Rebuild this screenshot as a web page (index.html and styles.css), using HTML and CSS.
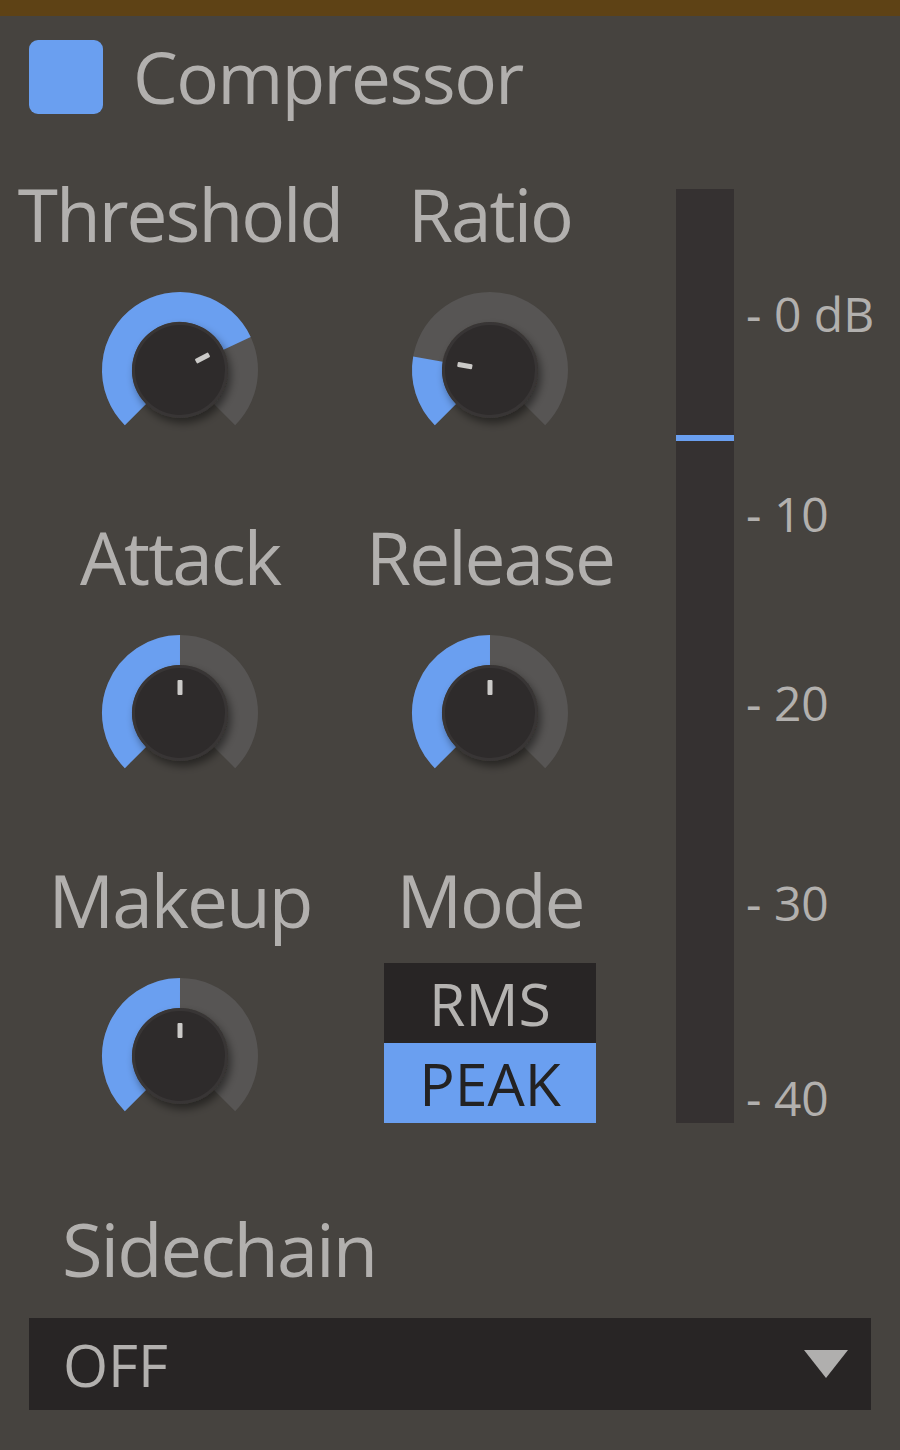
FILE: index.html
```html
<!DOCTYPE html>
<html lang="en">
<head>
  <meta charset="UTF-8">
  <title>Compressor</title>
  <link rel="stylesheet" href="styles.css">
</head>
<body>
  <svg width="0" height="0" class="defs">
    <defs>
      <filter id="knobShadow" x="-30%" y="-30%" width="160%" height="160%">
        <feDropShadow dx="3" dy="5" stdDeviation="4" flood-color="#000" flood-opacity="0.45"/>
      </filter>
    </defs>
  </svg>

  <div class="top-bar"></div>

  <div class="header">
    <div class="enable-box"></div>
    <div class="title">Compressor</div>
  </div>

  <div class="main">
    <div class="controls">
      <div class="cell">
        <div class="label">Threshold</div>
        <svg class="knob" viewBox="0 0 160 160" width="160" height="160">
          <path class="track" d="M35.45 124.55 A63 63 0 1 1 124.55 124.55"/>
          <path class="value" d="M35.45 124.55 A63 63 0 1 1 137.1 53.4"/>
          <circle class="cap-rim" cx="80" cy="80" r="48" filter="url(#knobShadow)"/>
          <circle class="cap" cx="80" cy="80" r="45"/>
          <rect class="pointer" x="77.5" y="47" width="5" height="15" rx="1" transform="rotate(62 80 80)"/>
        </svg>
      </div>

      <div class="cell">
        <div class="label">Ratio</div>
        <svg class="knob" viewBox="0 0 160 160" width="160" height="160">
          <path class="track" d="M35.45 124.55 A63 63 0 1 1 124.55 124.55"/>
          <path class="value" d="M35.45 124.55 A63 63 0 0 1 17.96 69.06"/>
          <circle class="cap-rim" cx="80" cy="80" r="48" filter="url(#knobShadow)"/>
          <circle class="cap" cx="80" cy="80" r="45"/>
          <rect class="pointer" x="77.5" y="47" width="5" height="15" rx="1" transform="rotate(-80 80 80)"/>
        </svg>
      </div>

      <div class="cell">
        <div class="label">Attack</div>
        <svg class="knob" viewBox="0 0 160 160" width="160" height="160">
          <path class="track" d="M35.45 124.55 A63 63 0 1 1 124.55 124.55"/>
          <path class="value" d="M35.45 124.55 A63 63 0 0 1 80 17"/>
          <circle class="cap-rim" cx="80" cy="80" r="48" filter="url(#knobShadow)"/>
          <circle class="cap" cx="80" cy="80" r="45"/>
          <rect class="pointer" x="77.5" y="47" width="5" height="15" rx="1"/>
        </svg>
      </div>

      <div class="cell">
        <div class="label">Release</div>
        <svg class="knob" viewBox="0 0 160 160" width="160" height="160">
          <path class="track" d="M35.45 124.55 A63 63 0 1 1 124.55 124.55"/>
          <path class="value" d="M35.45 124.55 A63 63 0 0 1 80 17"/>
          <circle class="cap-rim" cx="80" cy="80" r="48" filter="url(#knobShadow)"/>
          <circle class="cap" cx="80" cy="80" r="45"/>
          <rect class="pointer" x="77.5" y="47" width="5" height="15" rx="1"/>
        </svg>
      </div>

      <div class="cell">
        <div class="label">Makeup</div>
        <svg class="knob" viewBox="0 0 160 160" width="160" height="160">
          <path class="track" d="M35.45 124.55 A63 63 0 1 1 124.55 124.55"/>
          <path class="value" d="M35.45 124.55 A63 63 0 0 1 80 17"/>
          <circle class="cap-rim" cx="80" cy="80" r="48" filter="url(#knobShadow)"/>
          <circle class="cap" cx="80" cy="80" r="45"/>
          <rect class="pointer" x="77.5" y="47" width="5" height="15" rx="1"/>
        </svg>
      </div>

      <div class="cell">
        <div class="label">Mode</div>
        <div class="mode-switch">
          <div class="mode-option">RMS</div>
          <div class="mode-option active">PEAK</div>
        </div>
      </div>
    </div>

    <div class="meter">
      <div class="meter-level"></div>
    </div>

    <div class="scale">
      <div class="tick">- 0 dB</div>
      <div class="tick">- 10</div>
      <div class="tick">- 20</div>
      <div class="tick">- 30</div>
      <div class="tick">- 40</div>
    </div>
  </div>

  <div class="sidechain">
    <div class="label">Sidechain</div>
    <div class="dropdown">
      <span>OFF</span>
      <span class="arrow"></span>
    </div>
  </div>
</body>
</html>
```

FILE: styles.css
```css
* {
  box-sizing: border-box;
}

body {
  margin: 0;
  background: #46433f;
  font-family: 'Open Sans', 'Noto Sans', sans-serif;
  color: #b2b0ae;
  overflow: hidden;
}

.defs {
  position: absolute;
}

.top-bar {
  height: 16px;
  background: #5e4215;
}

.header {
  display: flex;
  align-items: center;
  gap: 30px;
  padding: 24px 0 0 29px;
}

.enable-box {
  width: 74px;
  height: 74px;
  border-radius: 9px;
  background: #6a9ff0;
}

.title {
  font-size: 71px;
  line-height: 74px;
  letter-spacing: -1.5px;
}

.main {
  display: flex;
  margin-top: 60px;
  padding-left: 25px;
}

.controls {
  display: grid;
  grid-template-columns: 310px 310px;
}

.cell {
  display: flex;
  flex-direction: column;
  align-items: center;
  height: 343px;
}

.label {
  font-size: 73px;
  line-height: 80px;
  letter-spacing: -2px;
  white-space: nowrap;
}

.knob {
  display: block;
  margin-top: 36px;
  overflow: visible;
}

.knob .track,
.knob .value {
  fill: none;
  stroke-width: 30;
}

.knob .track {
  stroke: #575554;
}

.knob .value {
  stroke: #6a9ff0;
}

.knob .cap-rim {
  fill: #383534;
}

.knob .cap {
  fill: #2e2b2b;
}

.knob .pointer {
  fill: #cbcac8;
}

.mode-switch {
  margin-top: 23px;
  width: 212px;
}

.mode-option {
  height: 80px;
  font-size: 59px;
  line-height: 80px;
  text-align: center;
  background: #282525;
  color: #b5b3b1;
}

.mode-option.active {
  background: #6a9ff0;
  color: #232222;
}

.meter {
  width: 58px;
  height: 934px;
  margin: 15px 0 0 31px;
  background: #353131;
}

.meter-level {
  height: 6px;
  margin-top: 246px;
  background: #6a9ff0;
}

.scale {
  display: flex;
  flex-direction: column;
  padding-top: 112px;
  margin-left: 12px;
}

.tick {
  font-size: 48px;
  line-height: 56px;
  white-space: nowrap;
}

/* dB marks are not evenly spaced on the meter */
.tick:nth-child(2) { margin-top: 144px; }
.tick:nth-child(3) { margin-top: 133px; }
.tick:nth-child(4) { margin-top: 144px; }
.tick:nth-child(5) { margin-top: 139px; }

.sidechain {
  padding: 6px 29px 0;
}

.sidechain .label {
  padding-left: 33px;
  font-size: 74px;
}

.dropdown {
  display: flex;
  align-items: center;
  justify-content: space-between;
  height: 92px;
  margin-top: 29px;
  padding: 0 23px 0 34px;
  background: #282525;
  font-size: 58px;
}

.dropdown .arrow {
  width: 0;
  height: 0;
  border-left: 22px solid transparent;
  border-right: 22px solid transparent;
  border-top: 28px solid #b0afae;
}
```
